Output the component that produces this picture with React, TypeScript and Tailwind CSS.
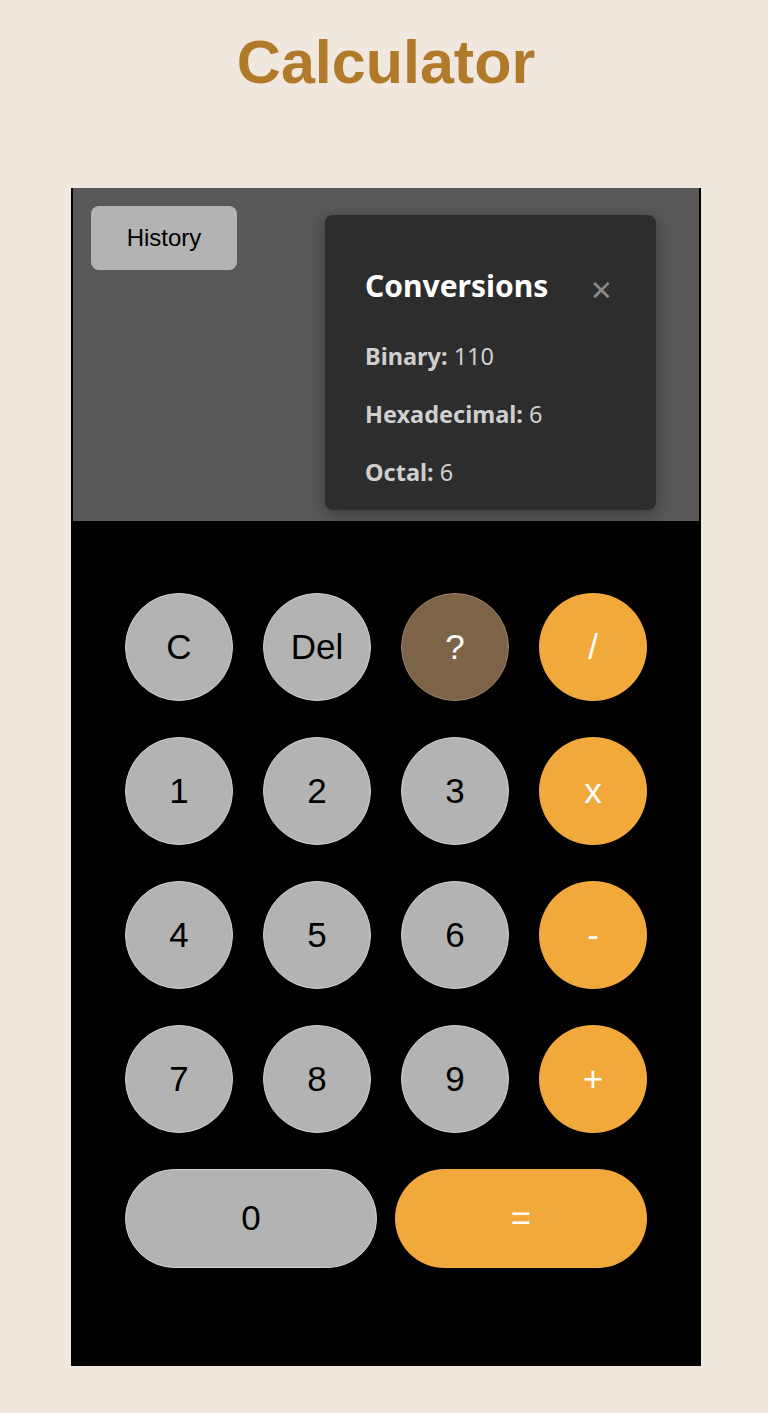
import { useState } from 'react';

const keys = [
  ['C', 'Del', '?', '/'],
  ['1', '2', '3', 'x'],
  ['4', '5', '6', '-'],
  ['7', '8', '9', '+'],
];

const isOperator = (k: string) => ['/', 'x', '-', '+'].includes(k);

const Key = ({ label }: { label: string }) => {
  if (label === '?') {
    return (
      <button className="flex h-[108px] w-[108px] items-center justify-center rounded-full border border-[#9a8266] bg-[#7d6348] text-[35px] text-white">
        {label}
      </button>
    );
  }
  if (isOperator(label)) {
    return (
      <button className="flex h-[108px] w-[108px] items-center justify-center rounded-full bg-[#f2a93b] text-[35px] text-white">
        {label}
      </button>
    );
  }
  return (
    <button className="flex h-[108px] w-[108px] items-center justify-center rounded-full border border-[#d0d0d0] bg-[#b3b3b3] text-[35px] text-black">
      {label}
    </button>
  );
};

const ConversionPanel = ({ onClose }: { onClose: () => void }) => (
  <div className="mt-[9px] flex h-[295px] w-[331px] flex-col rounded-lg bg-[#2d2d2d] pl-10 pr-10 pt-[49px] font-['Noto_Sans',sans-serif] shadow-[0_4px_16px_rgba(0,0,0,0.35)]">
    <div className="flex items-center justify-between">
      <h2 className="text-[30px] leading-[44px] font-bold text-white">Conversions</h2>
      <button onClick={onClose} className="mr-[4px] mt-[4px] text-[37px] leading-none text-[#8a8a8a]">
        ×
      </button>
    </div>
    <div className="mt-[32px] flex flex-col gap-[26px] text-[23.5px] leading-[32px] text-[#cfcfcf]">
      <p>
        <span className="font-bold">Binary:</span> 110
      </p>
      <p>
        <span className="font-bold">Hexadecimal:</span> 6
      </p>
      <p>
        <span className="font-bold">Octal:</span> 6
      </p>
    </div>
  </div>
);

const App = () => {
  const [showPanel, setShowPanel] = useState(true);

  return (
    <div className="min-h-[1413px] w-full bg-[#f0e8df] pl-[4px] font-['Liberation_Sans',Arial,sans-serif]">
      <h1 className="pt-[26px] text-center text-[61px] leading-[72px] font-bold text-[#b07a2a]">
        Calculator
      </h1>
      <div className="mx-auto mt-[90px] flex w-[630px] flex-col border-x-2 border-black bg-black">
        <div className="flex h-[333px] items-start justify-between bg-[#595757] pl-[18px] pr-[43px] pt-[18px]">
          <button className="h-[64px] w-[146px] rounded-lg bg-[#b3b3b3] text-[24px] text-black">
            History
          </button>
          {showPanel && <ConversionPanel onClose={() => setShowPanel(false)} />}
        </div>
        <div className="flex flex-col gap-[36px] px-[52px] pb-[98px] pt-[72px]">
          {keys.map((row, i) => (
            <div key={i} className="flex gap-[30px]">
              {row.map((k) => (
                <Key key={k} label={k} />
              ))}
            </div>
          ))}
          <div className="flex gap-[18px]">
            <button className="flex h-[99px] w-[252px] items-center justify-center rounded-full border border-[#d0d0d0] bg-[#b3b3b3] text-[35px] text-black">
              0
            </button>
            <button className="flex h-[99px] w-[252px] items-center justify-center rounded-full bg-[#f2a93b] text-[35px] text-white">
              =
            </button>
          </div>
        </div>
      </div>
    </div>
  );
};

export default App;
